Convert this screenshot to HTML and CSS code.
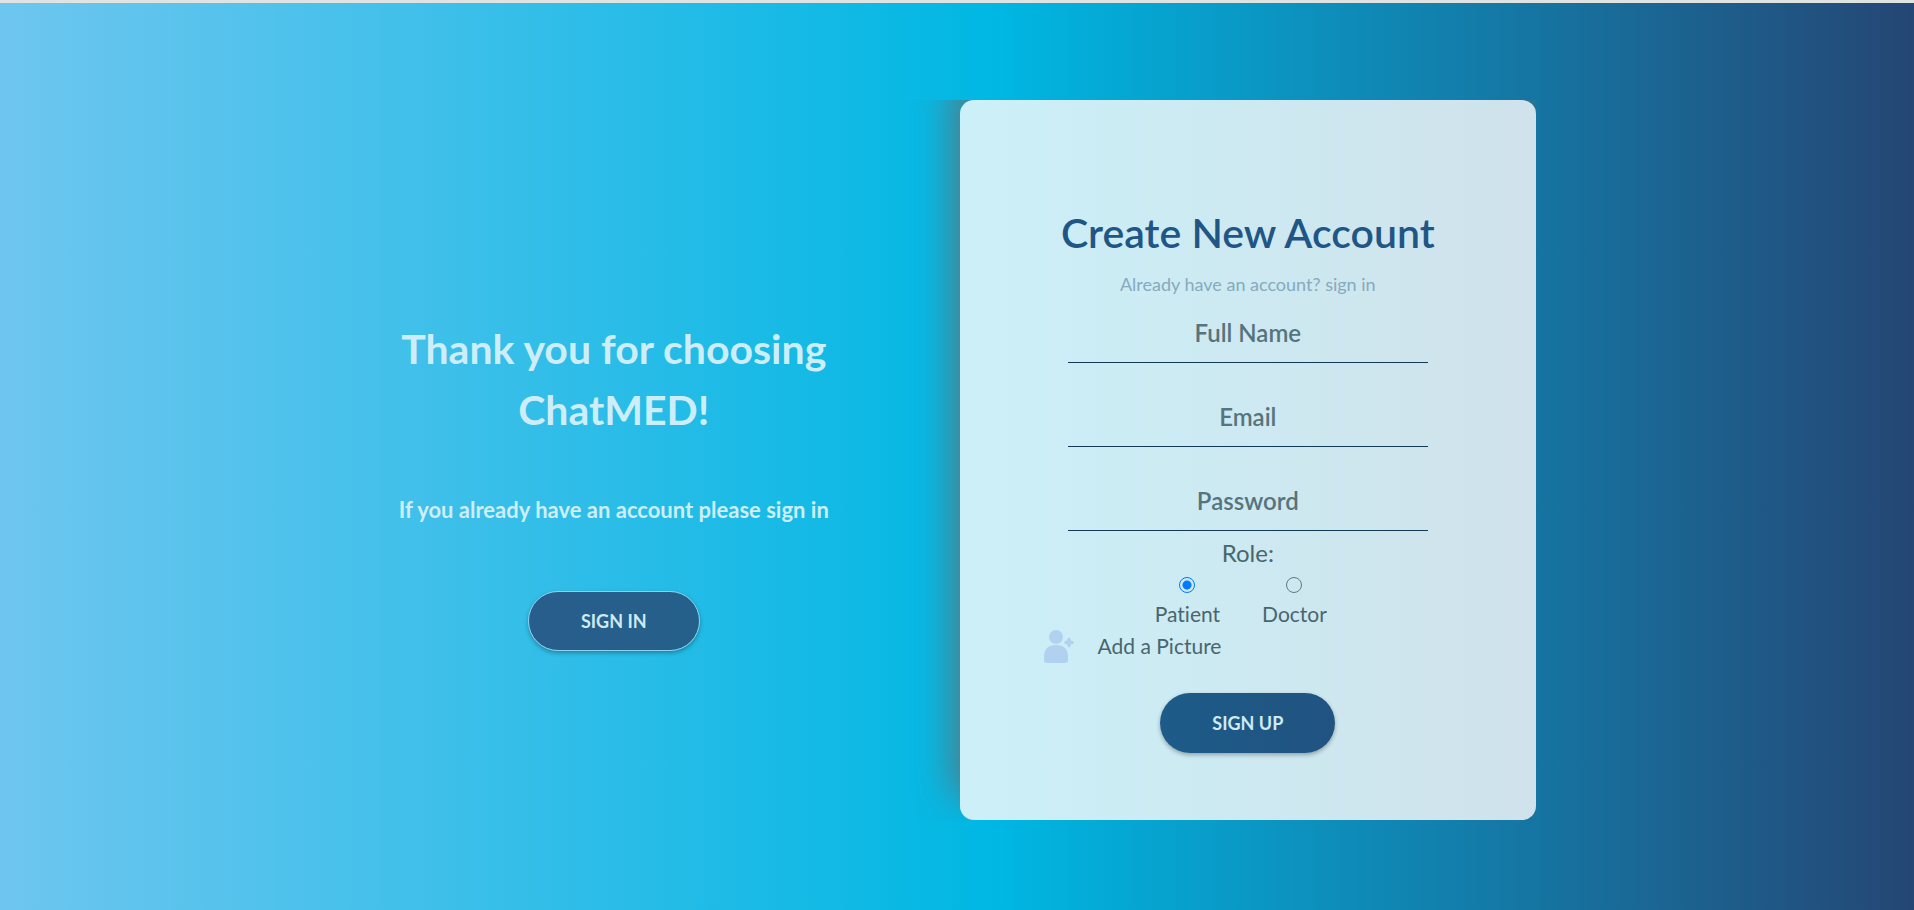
FILE: index.html
```html
<!DOCTYPE html>
<html lang="en">
<head>
<meta charset="utf-8">
<meta name="viewport" content="width=device-width, initial-scale=1">
<title>ChatMED</title>
<link rel="stylesheet" href="styles.css">
</head>
<body>
<main class="layout">
  <section class="intro">
    <h2 class="intro-title">Thank you for choosing ChatMED!</h2>
    <p class="intro-text">If you already have an account please sign in</p>
    <button class="button button-outline" type="button">SIGN IN</button>
  </section>
  <form class="card">
    <h1 class="card-title">Create New Account</h1>
    <a class="card-link" href="#">Already have an account? sign in</a>
    <input class="field" type="text" placeholder="Full Name" aria-label="Full Name">
    <input class="field" type="email" placeholder="Email" aria-label="Email">
    <input class="field" type="password" placeholder="Password" aria-label="Password">
    <fieldset class="roles">
      <legend class="roles-title">Role:</legend>
      <div class="roles-options">
        <label class="role"><input class="radio" type="radio" name="role" checked>Patient</label>
        <label class="role"><input class="radio" type="radio" name="role">Doctor</label>
      </div>
    </fieldset>
    <button class="picture" type="button">
      <svg class="picture-icon" viewBox="0 0 30 33" aria-hidden="true">
        <circle cx="12" cy="7" r="7"/>
        <path d="M0 27C0 19 4 15 12 15s12 4 12 12v3q0 3-3 3H3q-3 0-3-3z"/>
        <path d="M25 9.500v6M22 12.500h6" fill="none" stroke="currentColor" stroke-width="3.500" stroke-linecap="round"/>
      </svg>
      <span>Add a Picture</span>
    </button>
    <button class="button" type="submit">SIGN UP</button>
  </form>
</main>
</body>
</html>
```
FILE: styles.css
```css
* {
  box-sizing: border-box;
}

body {
  margin: 0;
  min-height: 100vh;
  border-top: 3px solid #dfe3e1;
  padding: 97px 0 80px;
  background: linear-gradient(90deg, #6ec6ef 0%, #00b7e3 52%, #254674 100%);
  color: #48666e;
  font-family: Lato, "Open Sans", sans-serif;
  font-variant-ligatures: none;
}

.layout {
  display: grid;
  grid-template-columns: 6fr 5fr;
  margin: 0 19.75% 0 14%;
  min-height: 720px;
  overflow: hidden;
}

.intro {
  display: flex;
  flex-direction: column;
  align-items: center;
  padding-top: 218px;
  text-align: center;
}

.intro-title {
  margin: 0;
  max-width: 500px;
  color: #cdeef8;
  font-size: 41px;
  font-weight: 700;
  line-height: 61px;
}

.intro-text {
  margin: 55px 0 66px;
  color: #cdeef8;
  font-size: 22px;
  font-weight: 700;
  line-height: 30px;
}

.button {
  height: 60px;
  padding: 0 52px;
  border: 0;
  border-radius: 30px;
  background: linear-gradient(90deg, #1d5b88, #215381);
  box-shadow: 0 2px 4px rgba(0, 0, 0, 0.3);
  color: #cdeaf5;
  font-family: inherit;
  font-size: 18px;
  font-weight: 700;
}

.button-outline {
  border: 1px solid #8fd0ee;
  background: linear-gradient(90deg, #285e8d, #246089);
}

.card {
  display: flex;
  flex-direction: column;
  align-items: center;
  padding: 103px 84px 60px;
  border-radius: 14px;
  background: linear-gradient(90deg, #ccf0f9, #cde9f1 50%, #d0e2eb);
  box-shadow: -8px -22px 36px rgba(100, 110, 112, 0.8);
}

.card-title {
  margin: 0;
  color: #1f5686;
  font-size: 41px;
  font-weight: 600;
  line-height: 60px;
  white-space: nowrap;
}

.card-link {
  margin-top: 10px;
  color: #86aabe;
  font-size: 18px;
  line-height: 22px;
  text-decoration: none;
}

.field {
  width: 360px;
  max-width: 100%;
  height: 60px;
  margin-bottom: 24px;
  padding: 0;
  border: 0;
  border-bottom: 1px solid #123a55;
  background: transparent;
  color: #48666e;
  font-family: inherit;
  font-size: 24px;
  font-weight: 600;
  text-align: center;
}

.card-link + .field {
  margin-top: 8px;
}

.field::placeholder {
  color: #56747c;
  opacity: 1;
}

.roles {
  margin: -17px 0 0;
  padding: 0;
  border: 0;
  text-align: center;
}

.roles-title {
  margin: 0 auto;
  padding: 0;
  font-size: 24px;
  line-height: 30px;
}

.roles-options {
  display: flex;
  gap: 42px;
  margin-right: 14px;
}

.role {
  display: flex;
  flex-direction: column;
  align-items: center;
  font-size: 21px;
  line-height: 30px;
}

.radio {
  appearance: none;
  width: 16px;
  height: 16px;
  margin: 9px 0 6px;
  border: 1px solid #5f7a82;
  border-radius: 50%;
}

.radio:checked {
  border: 1px solid #0078ff;
  background: radial-gradient(circle, #0078ff 4px, transparent 5px);
}

.picture {
  display: flex;
  align-items: center;
  align-self: flex-start;
  gap: 24px;
  padding: 0;
  border: 0;
  background: transparent;
  color: inherit;
  font-family: inherit;
  font-size: 21px;
  line-height: 34px;
}

.picture-icon {
  width: 30px;
  height: 33px;
  fill: currentColor;
  color: #b0d2f0;
}

.picture + .button {
  margin-top: 30px;
}
```
